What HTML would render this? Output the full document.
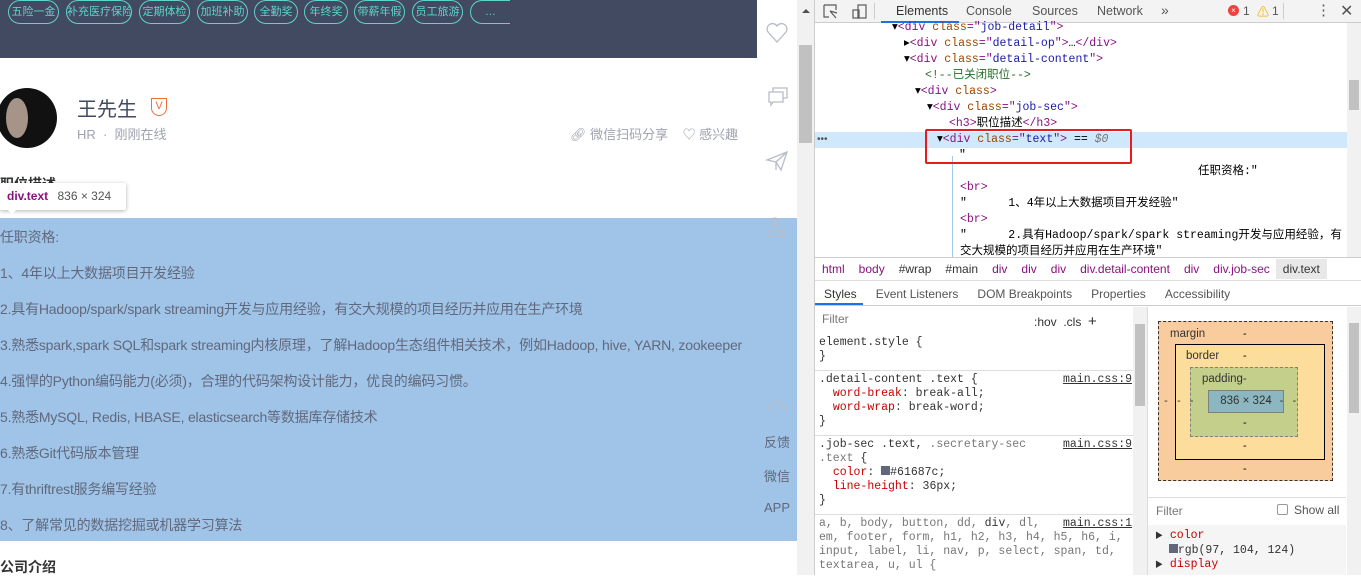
<!DOCTYPE html>
<html><head><meta charset="utf-8"><style>
*{margin:0;padding:0;box-sizing:border-box}
body{width:1361px;height:575px;overflow:hidden;position:relative;background:#fff;font-family:"Liberation Sans","Noto Sans CJK SC",sans-serif}
.a{position:absolute}
.hdr{left:0;top:0;width:757px;height:58px;background:#414a60}
.tag{position:absolute;top:0;height:24px;border:1px solid #5dd5c8;border-radius:12px;color:#5dd5c8;font-size:11px;line-height:22px;text-align:center;white-space:nowrap;overflow:hidden}
.mono{font-family:"Liberation Mono","Noto Sans CJK SC",monospace;font-size:11.5px;white-space:pre}
.tg{color:#881280}.at{color:#994500}.av{color:#1a1aa6}
.ln{position:absolute;height:16px;line-height:16px}
.jt{position:absolute;left:0;font-size:14px;color:#61687c;white-space:nowrap;letter-spacing:-0.2px}
.sb{position:absolute;left:757px;width:40px;text-align:center;font-size:13px;color:#61687c}
</style></head><body>
<div class="a hdr"></div>
<div class="tag" style="left:8px;width:51px">五险一金</div>
<div class="tag" style="left:66px;width:66px">补充医疗保险</div>
<div class="tag" style="left:139px;width:51px">定期体检</div>
<div class="tag" style="left:197px;width:51px">加班补助</div>
<div class="tag" style="left:254px;width:44px">全勤奖</div>
<div class="tag" style="left:304px;width:44px">年终奖</div>
<div class="tag" style="left:354px;width:51px">带薪年假</div>
<div class="tag" style="left:412px;width:51px">员工旅游</div>
<div class="tag" style="left:470px;width:40px;border-right:none;border-radius:12px 0 0 12px">…</div>
<div class="a" style="left:757px;top:0;width:40px;height:575px;background:#fff"></div>
<!-- profile -->
<div class="a" style="left:-3px;top:88px;width:60px;height:60px;border-radius:50%;background:#111"></div>
<div class="a" style="left:6px;top:98px;width:22px;height:40px;border-radius:50%;background:#d8c0b0;opacity:.75"></div>
<div class="a" style="left:77px;top:93px;font-size:20px;color:#414a60">王先生</div>
<div class="a" style="left:151px;top:98px;width:16px;height:18px;border:1.5px solid #f26d3d;color:#f26d3d;font-size:11px;text-align:center;line-height:15px;border-radius:0 0 8px 8px">V</div>
<div class="a" style="left:77px;top:124px;font-size:13px;color:#9fa3b0">HR &nbsp;·&nbsp; 刚刚在线</div>
<div class="a" style="left:570px;top:124px;font-size:13px;color:#9fa3b0;white-space:nowrap">&#128279;&#xFE0E; 微信扫码分享 &nbsp;&nbsp; ♡ 感兴趣</div>
<div class="a" style="left:0;top:174px;font-size:14px;font-weight:bold;color:#333">职位描述</div>
<div class="a" style="left:0;top:557px;font-size:14px;font-weight:bold;color:#333">公司介绍</div>
<!-- highlight -->
<div class="a" style="left:0;top:218px;width:813px;height:323px;background:#9fc4e8"></div>
<div class="jt" style="top:227px">任职资格:</div>
<div class="jt" style="top:263px">1、4年以上大数据项目开发经验</div>
<div class="jt" style="top:299px">2.具有Hadoop/spark/spark streaming开发与应用经验，有交大规模的项目经历并应用在生产环境</div>
<div class="jt" style="top:335px">3.熟悉spark,spark SQL和spark streaming内核原理，了解Hadoop生态组件相关技术，例如Hadoop, hive, YARN, zookeeper</div>
<div class="jt" style="top:371px">4.强悍的Python编码能力(必须)，合理的代码架构设计能力，优良的编码习惯。</div>
<div class="jt" style="top:407px">5.熟悉MySQL, Redis, HBASE, elasticsearch等数据库存储技术</div>
<div class="jt" style="top:443px">6.熟悉Git代码版本管理</div>
<div class="jt" style="top:479px">7.有thriftrest服务编写经验</div>
<div class="jt" style="top:515px">8、了解常见的数据挖掘或机器学习算法</div>
<!-- tooltip -->
<div class="a" style="left:0;top:183px;width:126px;height:27px;background:#fff;box-shadow:0 1px 4px rgba(0,0,0,.3);border-radius:2px;font-size:12px;line-height:27px;padding-left:7px;white-space:nowrap"><b style="color:#881280">div.text</b> <span style="color:#555;margin-left:6px">836 × 324</span></div>
<div class="a" style="left:7px;top:209px;width:0;height:0;border:5px solid transparent;border-top-color:#fff"></div>
<!-- sidebar icons -->
<svg class="a" style="left:757px;top:0" width="40" height="240" fill="none" stroke="#b8bcc8" stroke-width="1.3">
<path d="M20 42 L11 32 A5 5 0 0 1 20 26 A5 5 0 0 1 29 32 Z"/>
<path d="M12 92 h14 v10 h-10 l-2 3 v-3 h-2 Z M16 92 v-4 h14 v10 h-4"/>
<path d="M10 160 L30 152 L24 170 L19 162 Z M19 162 L30 152 M19 162 v8"/>
<circle cx="18" cy="222" r="4"/><path d="M10 236 q8 -12 16 0 Z M23 232 h5 M23 235 h5"/>
</svg>
<svg class="a" style="left:757px;top:396px" width="40" height="20" fill="none" stroke="#b8bcc8" stroke-width="1.5"><path d="M10 14 L20 4 L30 14"/></svg>
<div class="sb" style="top:432px">反馈</div>
<div class="sb" style="top:466px">微信</div>
<div class="sb" style="top:500px">APP</div>
<!-- page scrollbar -->
<div class="a" style="left:797px;top:0;width:17px;height:575px;background:#f1f1f1"></div>
<div class="a" style="left:799px;top:45px;width:13px;height:98px;background:#c1c1c1"></div>
<div class="a" style="left:802px;top:5px;width:0;height:0;border:4px solid transparent;border-bottom-color:#505050"></div>
<div class="a" style="left:814px;top:0;width:1px;height:575px;background:#ccc"></div>
<!-- devtools -->
<div class="a" style="left:815px;top:0;width:546px;height:23px;background:#f3f3f3;border-bottom:1px solid #ccc"></div>
<svg class="a" style="left:822px;top:3px" width="50" height="17" fill="none" stroke="#5a5a5a" stroke-width="1.2"><path d="M2 2h12v5M2 2v12h5M8 8l6 7M8 8l7 2"/><rect x="36" y="2" width="8" height="13"/><rect x="31" y="7" width="6" height="8"/></svg>
<div class="a" style="left:874px;top:3px;width:1px;height:16px;background:#ccc"></div>
<div class="a" style="left:881px;top:0;width:78px;height:23px;border-bottom:2px solid #1a73e8"></div>
<div class="a" style="left:896px;top:4px;font-size:12.5px;color:#333">Elements</div>
<div class="a" style="left:966px;top:4px;font-size:12.5px;color:#555">Console</div>
<div class="a" style="left:1032px;top:4px;font-size:12.5px;color:#555">Sources</div>
<div class="a" style="left:1097px;top:4px;font-size:12.5px;color:#555">Network</div>
<div class="a" style="left:1161px;top:2px;font-size:14px;color:#555">»</div>
<div class="a" style="left:1228px;top:5px;width:11px;height:11px;border-radius:50%;background:#e8453c;color:#fff;font-size:8px;text-align:center;line-height:11px">×</div>
<div class="a" style="left:1243px;top:4px;font-size:12px;color:#555">1</div>
<div class="a" style="left:1257px;top:3px;font-size:12px;color:#f3b400">⚠</div>
<div class="a" style="left:1272px;top:4px;font-size:12px;color:#555">1</div>
<div class="a" style="left:1283px;top:3px;width:1px;height:16px;background:#ccc"></div>
<div class="a" style="left:1316px;top:1px;font-size:15px;color:#555">⋮</div>
<div class="a" style="left:1340px;top:1px;font-size:16px;color:#555">✕</div>
<!-- DOM tree -->
<div class="a" style="left:815px;top:132px;width:532px;height:16px;background:#cfe8fc"></div>
<div class="a" style="left:817px;top:134px;font-size:10px;color:#555">•••</div>
<div class="a mono" style="left:815px;top:20px;width:532px;height:238px;overflow:hidden">
<div class="ln" style="left:77px;top:0">▾<span class="tg">&lt;div</span> <span class="at">class</span><span class="tg">="</span><span class="av">job-detail</span><span class="tg">"&gt;</span></div>
<div class="ln" style="left:89px;top:16px">▸<span class="tg">&lt;div</span> <span class="at">class</span><span class="tg">="</span><span class="av">detail-op</span><span class="tg">"&gt;</span>…<span class="tg">&lt;/div&gt;</span></div>
<div class="ln" style="left:89px;top:32px">▾<span class="tg">&lt;div</span> <span class="at">class</span><span class="tg">="</span><span class="av">detail-content</span><span class="tg">"&gt;</span></div>
<div class="ln" style="left:110px;top:48px;color:#236e25">&lt;!--已关闭职位--&gt;</div>
<div class="ln" style="left:100px;top:64px">▾<span class="tg">&lt;div</span> <span class="at">class</span><span class="tg">&gt;</span></div>
<div class="ln" style="left:112px;top:80px">▾<span class="tg">&lt;div</span> <span class="at">class</span><span class="tg">="</span><span class="av">job-sec</span><span class="tg">"&gt;</span></div>
<div class="ln" style="left:134px;top:96px"><span class="tg">&lt;h3&gt;</span>职位描述<span class="tg">&lt;/h3&gt;</span></div>
<div class="ln" style="left:122px;top:112px">▾<span class="tg">&lt;div</span> <span class="at">class</span><span class="tg">="</span><span class="av">text</span><span class="tg">"&gt;</span> == <i style="color:#777">$0</i></div>
<div class="ln" style="left:144px;top:128px">"</div>
<div class="ln" style="left:383px;top:144px">任职资格:"</div>
<div class="ln" style="left:145px;top:160px"><span class="tg">&lt;br&gt;</span></div>
<div class="ln" style="left:145px;top:176px">"      1、4年以上大数据项目开发经验"</div>
<div class="ln" style="left:145px;top:192px"><span class="tg">&lt;br&gt;</span></div>
<div class="ln" style="left:145px;top:208px">"      2.具有Hadoop/spark/spark streaming开发与应用经验，有</div>
<div class="ln" style="left:145px;top:224px">交大规模的项目经历并应用在生产环境"</div>
<div class="ln" style="left:137px;top:136px;width:1px;height:110px;background:#a8c8e8"></div>
</div>
<div class="a" style="left:925px;top:129px;width:207px;height:35px;border:2px solid #e81c1c;border-radius:2px"></div>
<div class="a" style="left:1347px;top:23px;width:14px;height:235px;background:#f1f1f1"></div>
<div class="a" style="left:1349px;top:80px;width:10px;height:30px;background:#c1c1c1"></div>
<!-- breadcrumb -->
<div class="a" style="left:815px;top:257px;width:546px;height:24px;border-top:1px solid #ccc;border-bottom:1px solid #ddd;font-size:12px;line-height:22px;white-space:nowrap;color:#881280">
<span style="margin-left:7px">html</span><span style="margin-left:14px">body</span><span style="margin-left:14px;color:#333">#wrap</span><span style="margin-left:14px;color:#333">#main</span><span style="margin-left:14px">div</span><span style="margin-left:14px">div</span><span style="margin-left:14px">div</span><span style="margin-left:14px">div.detail-content</span><span style="margin-left:14px">div</span><span style="margin-left:14px">div.job-sec</span><span style="margin-left:6px;background:#e8e8e8;color:#333;padding:3px 7px">div.text</span></div>
<div class="a" style="left:815px;top:282px;width:546px;height:24px;border-bottom:1px solid #ccc;font-size:12px;line-height:24px;color:#555;white-space:nowrap">
<span style="margin-left:9px;color:#333">Styles</span><span style="margin-left:19px">Event Listeners</span><span style="margin-left:19px">DOM Breakpoints</span><span style="margin-left:19px">Properties</span><span style="margin-left:19px">Accessibility</span></div>
<div class="a" style="left:815px;top:303px;width:48px;height:2px;background:#1a73e8"></div>
<!-- styles pane -->
<div class="a" style="left:815px;top:307px;width:318px;height:268px;background:#fff"></div>
<div class="a" style="left:818px;top:310px;width:196px;height:19px;background:#fff;font-size:12px;color:#777;line-height:19px;padding-left:4px">Filter</div>
<div class="a" style="left:1034px;top:313px;font-size:12px;color:#333;white-space:nowrap">:hov &nbsp;.cls &nbsp;<span style="font-size:15px">+</span></div>
<div class="a" style="left:815px;top:334px;width:318px;height:241px;background:#fff"></div>
<div class="a mono" style="left:819px;top:336px;line-height:14px;color:#333">element.style {
}</div>
<div class="a" style="left:815px;top:370px;width:318px;height:1px;background:#ddd"></div>
<div class="a mono" style="left:819px;top:373px;line-height:14px;color:#333">.detail-content .text {
  <span style="color:#c80000">word-break</span>: break-all;
  <span style="color:#c80000">word-wrap</span>: break-word;
}</div>
<div class="a mono" style="left:1063px;top:373px;color:#333;text-decoration:underline">main.css:9</div>
<div class="a" style="left:815px;top:435px;width:318px;height:1px;background:#ddd"></div>
<div class="a mono" style="left:819px;top:438px;line-height:14px;color:#333">.job-sec .text, <span style="color:#777">.secretary-sec
.text</span> {
  <span style="color:#c80000">color</span>: <span style="display:inline-block;width:9px;height:9px;background:#61687c"></span>#61687c;
  <span style="color:#c80000">line-height</span>: 36px;
}</div>
<div class="a mono" style="left:1063px;top:438px;color:#333;text-decoration:underline">main.css:9</div>
<div class="a" style="left:815px;top:514px;width:318px;height:1px;background:#ddd"></div>
<div class="a mono" style="left:819px;top:517px;line-height:14px;color:#777">a, b, body, button, dd, <span style="color:#333">div</span>, dl,
em, footer, form, h1, h2, h3, h4, h5, h6, i,
input, label, li, nav, p, select, span, td,
textarea, u, ul {</div>
<div class="a mono" style="left:1063px;top:517px;color:#333;text-decoration:underline">main.css:1</div>
<div class="a" style="left:1133px;top:307px;width:14px;height:268px;background:#f1f1f1"></div>
<div class="a" style="left:1135px;top:324px;width:10px;height:82px;background:#c1c1c1"></div>
<div class="a" style="left:1147px;top:307px;width:1px;height:268px;background:#ddd"></div>
<!-- box model -->
<div class="a" style="left:1148px;top:307px;width:198px;height:186px;background:#fff"></div>
<div class="a" style="left:1158px;top:321px;width:175px;height:160px;background:#f9cc9d;border:1px dashed #333"></div>
<div class="a" style="left:1170px;top:328px;font-size:11.5px;color:#333">margin</div>
<div class="a" style="left:1175px;top:344px;width:150px;height:116px;background:#fddd9b;border:1px solid #000"></div>
<div class="a" style="left:1186px;top:350px;font-size:11.5px;color:#333">border</div>
<div class="a" style="left:1190px;top:367px;width:108px;height:70px;background:#c3cf8a;border:1px dashed #808080"></div>
<div class="a" style="left:1202px;top:373px;font-size:11.5px;color:#333">padding-</div>
<div class="a" style="left:1208px;top:390px;width:76px;height:23px;background:#8cb6c0;border:1px solid #808080;font-size:11.5px;text-align:center;line-height:21px;color:#333">836 × 324</div>
<div class="a" style="left:1158px;top:395px;width:177px;font-size:11px;color:#333;white-space:pre">  -   -   -                        -   -   -</div>
<div class="a" style="left:1243px;top:328px;font-size:11px">-</div>
<div class="a" style="left:1243px;top:350px;font-size:11px">-</div>
<div class="a" style="left:1243px;top:417px;font-size:11px">-</div>
<div class="a" style="left:1243px;top:440px;font-size:11px">-</div>
<div class="a" style="left:1243px;top:463px;font-size:11px">-</div>
<div class="a" style="left:1148px;top:497px;width:198px;height:1px;background:#ddd"></div>
<div class="a" style="left:1156px;top:504px;font-size:12px;color:#777">Filter</div>
<div class="a" style="left:1277px;top:504px;width:11px;height:11px;border:1px solid #999;border-radius:2px"></div>
<div class="a" style="left:1294px;top:503px;font-size:12px;color:#555">Show all</div>
<div class="a" style="left:1148px;top:525px;width:198px;height:50px;background:#f5f5f5"></div>
<div class="a mono" style="left:1155px;top:529px;line-height:14px;color:#333"><span style="font-size:8px">▶</span> <span style="color:#c80000">color</span>
  <span style="display:inline-block;width:9px;height:9px;background:#61687c"></span>rgb(97, 104, 124)
<span style="font-size:8px">▶</span> <span style="color:#c80000">display</span></div>
<div class="a" style="left:1347px;top:307px;width:14px;height:268px;background:#f1f1f1"></div>
<div class="a" style="left:1349px;top:323px;width:10px;height:90px;background:#c1c1c1"></div>
</body></html>
